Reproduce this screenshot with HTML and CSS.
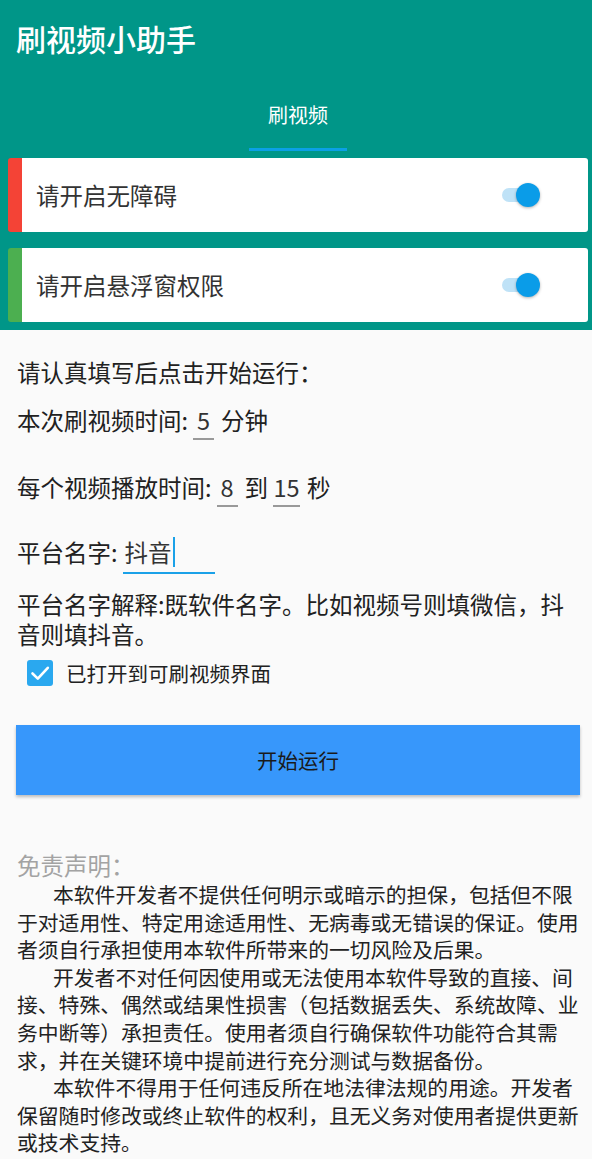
FILE: index.html
```html
<!DOCTYPE html>
<html lang="zh-CN">
<head>
    <meta charset="UTF-8">
    <meta name="viewport" content="width=device-width, initial-scale=1.0">
    <title>刷视频小助手</title>
    <link rel="stylesheet" href="styles.css">
</head>
<body>
    <header class="appbar">
        <h1 class="app-title">刷视频小助手</h1>
        <nav class="tabs">
            <div class="tab active">刷视频</div>
        </nav>
        <div class="perm-card red">
            <span class="perm-text">请开启无障碍</span>
            <span class="switch on"><span class="thumb"></span></span>
        </div>
        <div class="perm-card green">
            <span class="perm-text">请开启悬浮窗权限</span>
            <span class="switch on"><span class="thumb"></span></span>
        </div>
    </header>

    <main class="content">
        <p class="intro">请认真填写后点击开始运行：</p>

        <div class="field-row time-row">
            <span>本次刷视频时间:</span>
            <span class="field num">5</span>
            <span class="unit">分钟</span>
        </div>

        <div class="field-row play-row">
            <span>每个视频播放时间:</span>
            <span class="field num">8</span>
            <span class="unit">到</span>
            <span class="field num wide">15</span>
            <span class="unit">秒</span>
        </div>

        <div class="field-row platform-row">
            <span>平台名字:</span>
            <span class="field focus">抖音<span class="caret"></span></span>
        </div>

        <p class="explain">平台名字解释:既软件名字。比如视频号则填微信，抖音则填抖音。</p>

        <label class="check-row">
            <svg class="checkbox" width="26" height="26" viewBox="0 0 26 26">
                <rect x="0" y="0" width="26" height="26" rx="3" fill="#2aa8ef"/>
                <path d="M5.5 13.5 L10.8 18.6 L20.8 7.8" fill="none" stroke="#fff" stroke-width="2.6" stroke-linecap="round" stroke-linejoin="round"/>
            </svg>
            <span>已打开到可刷视频界面</span>
        </label>

        <button class="start-btn">开始运行</button>

        <h2 class="notice-title">免责声明：</h2>
        <div class="notice">
            <p>本软件开发者不提供任何明示或暗示的担保，包括但不限于对适用性、特定用途适用性、无病毒或无错误的保证。使用者须自行承担使用本软件所带来的一切风险及后果。</p>
            <p>开发者不对任何因使用或无法使用本软件导致的直接、间接、特殊、偶然或结果性损害（包括数据丢失、系统故障、业务中断等）承担责任。使用者须自行确保软件功能符合其需求，并在关键环境中提前进行充分测试与数据备份。</p>
            <p>本软件不得用于任何违反所在地法律法规的用途。开发者保留随时修改或终止软件的权利，且无义务对使用者提供更新或技术支持。</p>
        </div>
    </main>
</body>
</html>
```

FILE: styles.css
```css
* {
    box-sizing: border-box;
}
body {
    margin: 0;
    background-color: #fafafa;
    font-family: "Noto Sans CJK SC", "Noto Sans", sans-serif;
    color: #212121;
}
.appbar {
    background-color: #009688;
    padding-bottom: 8px;
}
.app-title {
    margin: 0;
    height: 76px;
    padding-left: 16px;
    display: flex;
    align-items: center;
    font-size: 30px;
    font-weight: 500;
    color: #fff;
}
.tabs {
    display: flex;
    justify-content: center;
    margin-bottom: 7px;
    padding-left: 4px;
}
.tab {
    width: 98px;
    height: 75px;
    display: flex;
    align-items: center;
    justify-content: center;
    padding-top: 4px;
    font-size: 20px;
    color: #fff;
}
.tab.active {
    border-bottom: 3px solid #0ba0e4;
}
.perm-card {
    display: flex;
    align-items: center;
    justify-content: space-between;
    height: 74px;
    margin: 0 4px 0 8px;
    padding: 0 50px 0 14px;
    background-color: #fff;
    border-radius: 3px;
    border-left: 14px solid #f44336;
}
.perm-card + .perm-card {
    margin-top: 16px;
}
.perm-card.green {
    border-left-color: #4caf50;
}
.perm-text {
    font-size: 23.5px;
    color: #333;
}
.switch {
    position: relative;
    width: 36px;
    height: 14px;
    border-radius: 7px;
    background-color: #bfe2f7;
}
.switch .thumb {
    position: absolute;
    right: -2px;
    top: -5px;
    width: 24px;
    height: 24px;
    border-radius: 50%;
    background-color: #0a9ce8;
    box-shadow: 0 1px 3px rgba(0, 0, 0, 0.3);
}
.content {
    padding: 0 10px 0 17px;
    font-size: 23.5px;
    line-height: 30px;
}
.intro {
    margin: 27px 0 0;
}
.field-row {
    display: flex;
    align-items: flex-start;
}
.time-row {
    margin-top: 18px;
}
.play-row {
    margin-top: 32px;
}
.platform-row {
    margin-top: 30px;
}
.field {
    display: inline-block;
    padding-bottom: 3px;
    border-bottom: 2px solid #999;
    margin-left: 5px;
    color: #333;
}
.field.num {
    width: 21px;
    text-align: center;
}
.field.num.wide {
    width: 27px;
}
.unit {
    margin-left: 7px;
}
.field.focus {
    position: relative;
    width: 92px;
    padding-left: 2px;
    padding-bottom: 5px;
    border-bottom-color: #1aa1e8;
}
.caret {
    display: inline-block;
    width: 2px;
    height: 30px;
    vertical-align: top;
    margin-left: 1px;
    background-color: #1aa1e8;
}
.explain {
    margin: 15px 0 0;
}
.check-row {
    display: flex;
    align-items: center;
    gap: 13px;
    margin-top: 9px;
    padding-left: 10px;
    font-size: 20.5px;
}
.checkbox {
    display: block;
}
.start-btn {
    display: block;
    width: 564px;
    height: 70px;
    margin: 37px 0 0 -1px;
    border: none;
    background-color: #3797fb;
    color: #1a1a1a;
    font-family: inherit;
    font-size: 20.5px;
    box-shadow: 0 2px 3px rgba(0, 0, 0, 0.25);
}
.notice-title {
    margin: 56px 0 0;
    font-size: 23.5px;
    font-weight: 400;
    line-height: 28px;
    color: #a3a3a3;
}
.notice {
    margin-top: 2px;
    font-size: 20.8px;
    line-height: 27.6px;
    color: #222;
}
.notice p {
    margin: 0;
    text-indent: 36px;
}
```
